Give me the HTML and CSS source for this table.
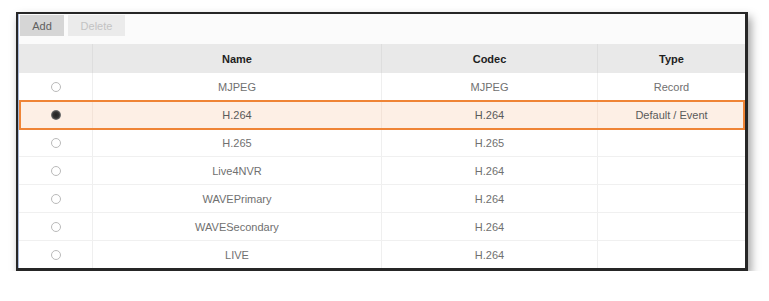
FILE: index.html
```html
<!DOCTYPE html>
<html>
<head>
<meta charset="utf-8">
<link rel="stylesheet" href="styles.css">
</head>
<body>
<div class="frame">
  <div class="inner">
    <div class="toolbar">
      <button class="btn btn-add">Add</button>
      <button class="btn btn-del">Delete</button>
    </div>
    <div class="row head">
      <div class="cell"></div>
      <div class="cell">Name</div>
      <div class="cell">Codec</div>
      <div class="cell">Type</div>
    </div>
    <div class="row">
      <div class="cell"><span class="radio"></span></div>
      <div class="cell">MJPEG</div>
      <div class="cell">MJPEG</div>
      <div class="cell">Record</div>
    </div>
    <div class="row selected">
      <div class="cell"><span class="radio on"></span></div>
      <div class="cell">H.264</div>
      <div class="cell">H.264</div>
      <div class="cell">Default / Event</div>
    </div>
    <div class="row">
      <div class="cell"><span class="radio"></span></div>
      <div class="cell">H.265</div>
      <div class="cell">H.265</div>
      <div class="cell"></div>
    </div>
    <div class="row">
      <div class="cell"><span class="radio"></span></div>
      <div class="cell">Live4NVR</div>
      <div class="cell">H.264</div>
      <div class="cell"></div>
    </div>
    <div class="row">
      <div class="cell"><span class="radio"></span></div>
      <div class="cell">WAVEPrimary</div>
      <div class="cell">H.264</div>
      <div class="cell"></div>
    </div>
    <div class="row">
      <div class="cell"><span class="radio"></span></div>
      <div class="cell">WAVESecondary</div>
      <div class="cell">H.264</div>
      <div class="cell"></div>
    </div>
    <div class="row last">
      <div class="cell"><span class="radio"></span></div>
      <div class="cell">LIVE</div>
      <div class="cell">H.264</div>
      <div class="cell"></div>
    </div>
  </div>
</div>
</body>
</html>
```

FILE: styles.css
```css
html, body {
  margin: 0;
  padding: 0;
  background: #ffffff;
}
body {
  font-family: "Liberation Sans", Arial, sans-serif;
  font-size: 11px;
  color: #707070;
}
.frame {
  margin: 12px 0 0 16px;
  width: 727px;
  border: 2px solid #262626;
  border-bottom-width: 3px;
  border-right-width: 3px;
  box-shadow: 3px 5px 9px rgba(0, 0, 0, 0.38);
  background: #fff;
}
.inner {
  border-left: 1px solid #a9b9d8;
}
.toolbar {
  height: 30px;
  display: flex;
  align-items: flex-start;
  gap: 4px;
  padding: 1px 0 0 1px;
  box-sizing: border-box;
  background: #fbfbfb;
}
.btn {
  font-family: inherit;
  font-size: 11px;
  height: 21px;
  border: 0;
  margin: 0;
  padding: 0;
}
.btn-add {
  width: 44px;
  background: #d6d6d6;
  color: #606060;
}
.btn-del {
  width: 57px;
  background: #ebebeb;
  color: #c3c3c3;
}
.row {
  display: grid;
  grid-template-columns: 74px 289px 216px 1fr;
  height: 28px;
  border-bottom: 1px solid #f0f0f0;
  box-sizing: border-box;
  position: relative;
}
.row.last {
  border-bottom: 0;
  height: 27px;
}
.cell {
  display: flex;
  align-items: center;
  justify-content: center;
  border-right: 1px solid #efefef;
}
.cell:last-child {
  border-right: 0;
}
.head {
  height: 29px;
  background: #e9e9e9;
  color: #1e1e1e;
  font-weight: bold;
  border-bottom: 0;
}
.head .cell {
  border-right-color: #dedede;
}
.selected {
  background: #fdefe5;
  outline: 2px solid #ef8436;
  outline-offset: -2px;
  height: 30px;
  margin-top: -1px;
  margin-bottom: -1px;
  z-index: 1;
  color: #5a5a5a;
}
.selected .cell {
  border-right-color: #f3e3d8;
}
.radio {
  width: 10px;
  height: 10px;
  border: 1.5px solid #bababa;
  border-radius: 50%;
  box-sizing: border-box;
  background: #fff;
}
.radio.on {
  border: 0;
  background: radial-gradient(circle, #222 0, #333 45%, #888 75%, rgba(255,255,255,0) 100%);
}
```
